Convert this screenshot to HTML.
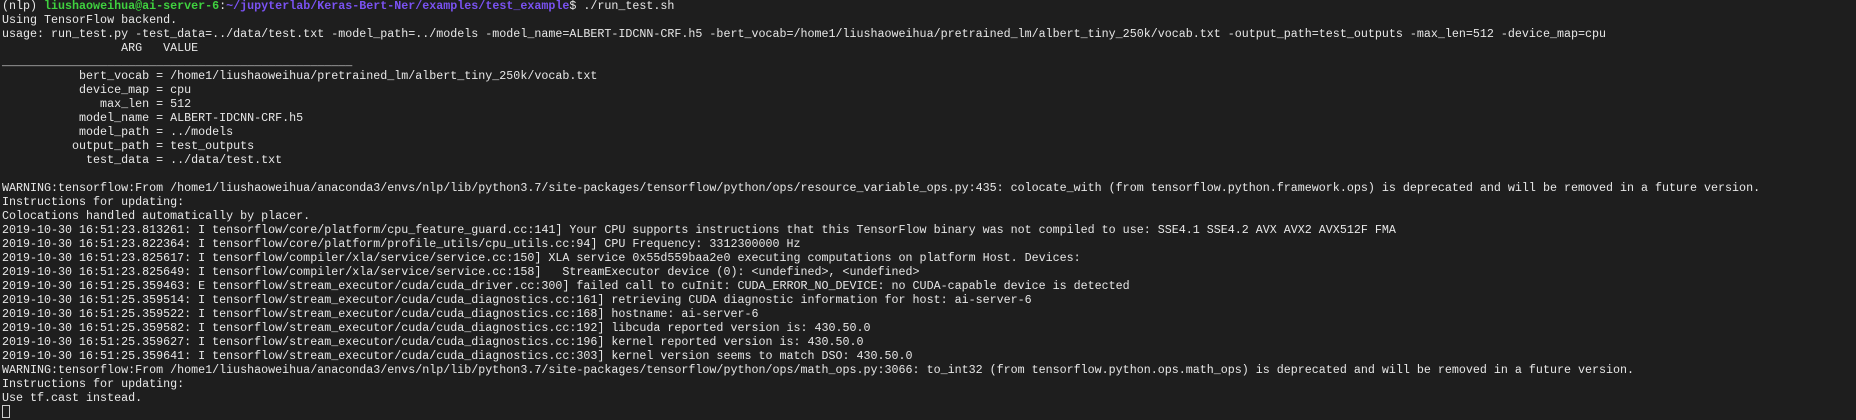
<!DOCTYPE html>
<html><head><meta charset="utf-8">
<style>
html,body{margin:0;padding:0;background:#1e1e1e;width:1856px;height:412px;overflow:hidden}
pre{margin:0;position:absolute;left:2px;top:-1px;font-family:"Liberation Mono",monospace;font-size:11.68px;line-height:14px;color:#e8e8e8;white-space:pre}
.g{color:#3fd13f;font-weight:bold}
.p{color:#7a52f2;font-weight:bold}
.cur{display:inline-block;width:6px;height:11px;border:1px solid #ccc;vertical-align:-2px}
</style></head><body>
<pre>(nlp) <span class="g">liushaoweihua@ai-server-6</span>:<span class="p">~/jupyterlab/Keras-Bert-Ner/examples/test_example</span>$ ./run_test.sh
Using TensorFlow backend.
usage: run_test.py -test_data=../data/test.txt -model_path=../models -model_name=ALBERT-IDCNN-CRF.h5 -bert_vocab=/home1/liushaoweihua/pretrained_lm/albert_tiny_250k/vocab.txt -output_path=test_outputs -max_len=512 -device_map=cpu
                 ARG   VALUE
__________________________________________________
           bert_vocab = /home1/liushaoweihua/pretrained_lm/albert_tiny_250k/vocab.txt
           device_map = cpu
              max_len = 512
           model_name = ALBERT-IDCNN-CRF.h5
           model_path = ../models
          output_path = test_outputs
            test_data = ../data/test.txt

WARNING:tensorflow:From /home1/liushaoweihua/anaconda3/envs/nlp/lib/python3.7/site-packages/tensorflow/python/ops/resource_variable_ops.py:435: colocate_with (from tensorflow.python.framework.ops) is deprecated and will be removed in a future version.
Instructions for updating:
Colocations handled automatically by placer.
2019-10-30 16:51:23.813261: I tensorflow/core/platform/cpu_feature_guard.cc:141] Your CPU supports instructions that this TensorFlow binary was not compiled to use: SSE4.1 SSE4.2 AVX AVX2 AVX512F FMA
2019-10-30 16:51:23.822364: I tensorflow/core/platform/profile_utils/cpu_utils.cc:94] CPU Frequency: 3312300000 Hz
2019-10-30 16:51:23.825617: I tensorflow/compiler/xla/service/service.cc:150] XLA service 0x55d559baa2e0 executing computations on platform Host. Devices:
2019-10-30 16:51:23.825649: I tensorflow/compiler/xla/service/service.cc:158]   StreamExecutor device (0): &lt;undefined&gt;, &lt;undefined&gt;
2019-10-30 16:51:25.359463: E tensorflow/stream_executor/cuda/cuda_driver.cc:300] failed call to cuInit: CUDA_ERROR_NO_DEVICE: no CUDA-capable device is detected
2019-10-30 16:51:25.359514: I tensorflow/stream_executor/cuda/cuda_diagnostics.cc:161] retrieving CUDA diagnostic information for host: ai-server-6
2019-10-30 16:51:25.359522: I tensorflow/stream_executor/cuda/cuda_diagnostics.cc:168] hostname: ai-server-6
2019-10-30 16:51:25.359582: I tensorflow/stream_executor/cuda/cuda_diagnostics.cc:192] libcuda reported version is: 430.50.0
2019-10-30 16:51:25.359627: I tensorflow/stream_executor/cuda/cuda_diagnostics.cc:196] kernel reported version is: 430.50.0
2019-10-30 16:51:25.359641: I tensorflow/stream_executor/cuda/cuda_diagnostics.cc:303] kernel version seems to match DSO: 430.50.0
WARNING:tensorflow:From /home1/liushaoweihua/anaconda3/envs/nlp/lib/python3.7/site-packages/tensorflow/python/ops/math_ops.py:3066: to_int32 (from tensorflow.python.ops.math_ops) is deprecated and will be removed in a future version.
Instructions for updating:
Use tf.cast instead.
<span class="cur"></span></pre>
</body></html>
